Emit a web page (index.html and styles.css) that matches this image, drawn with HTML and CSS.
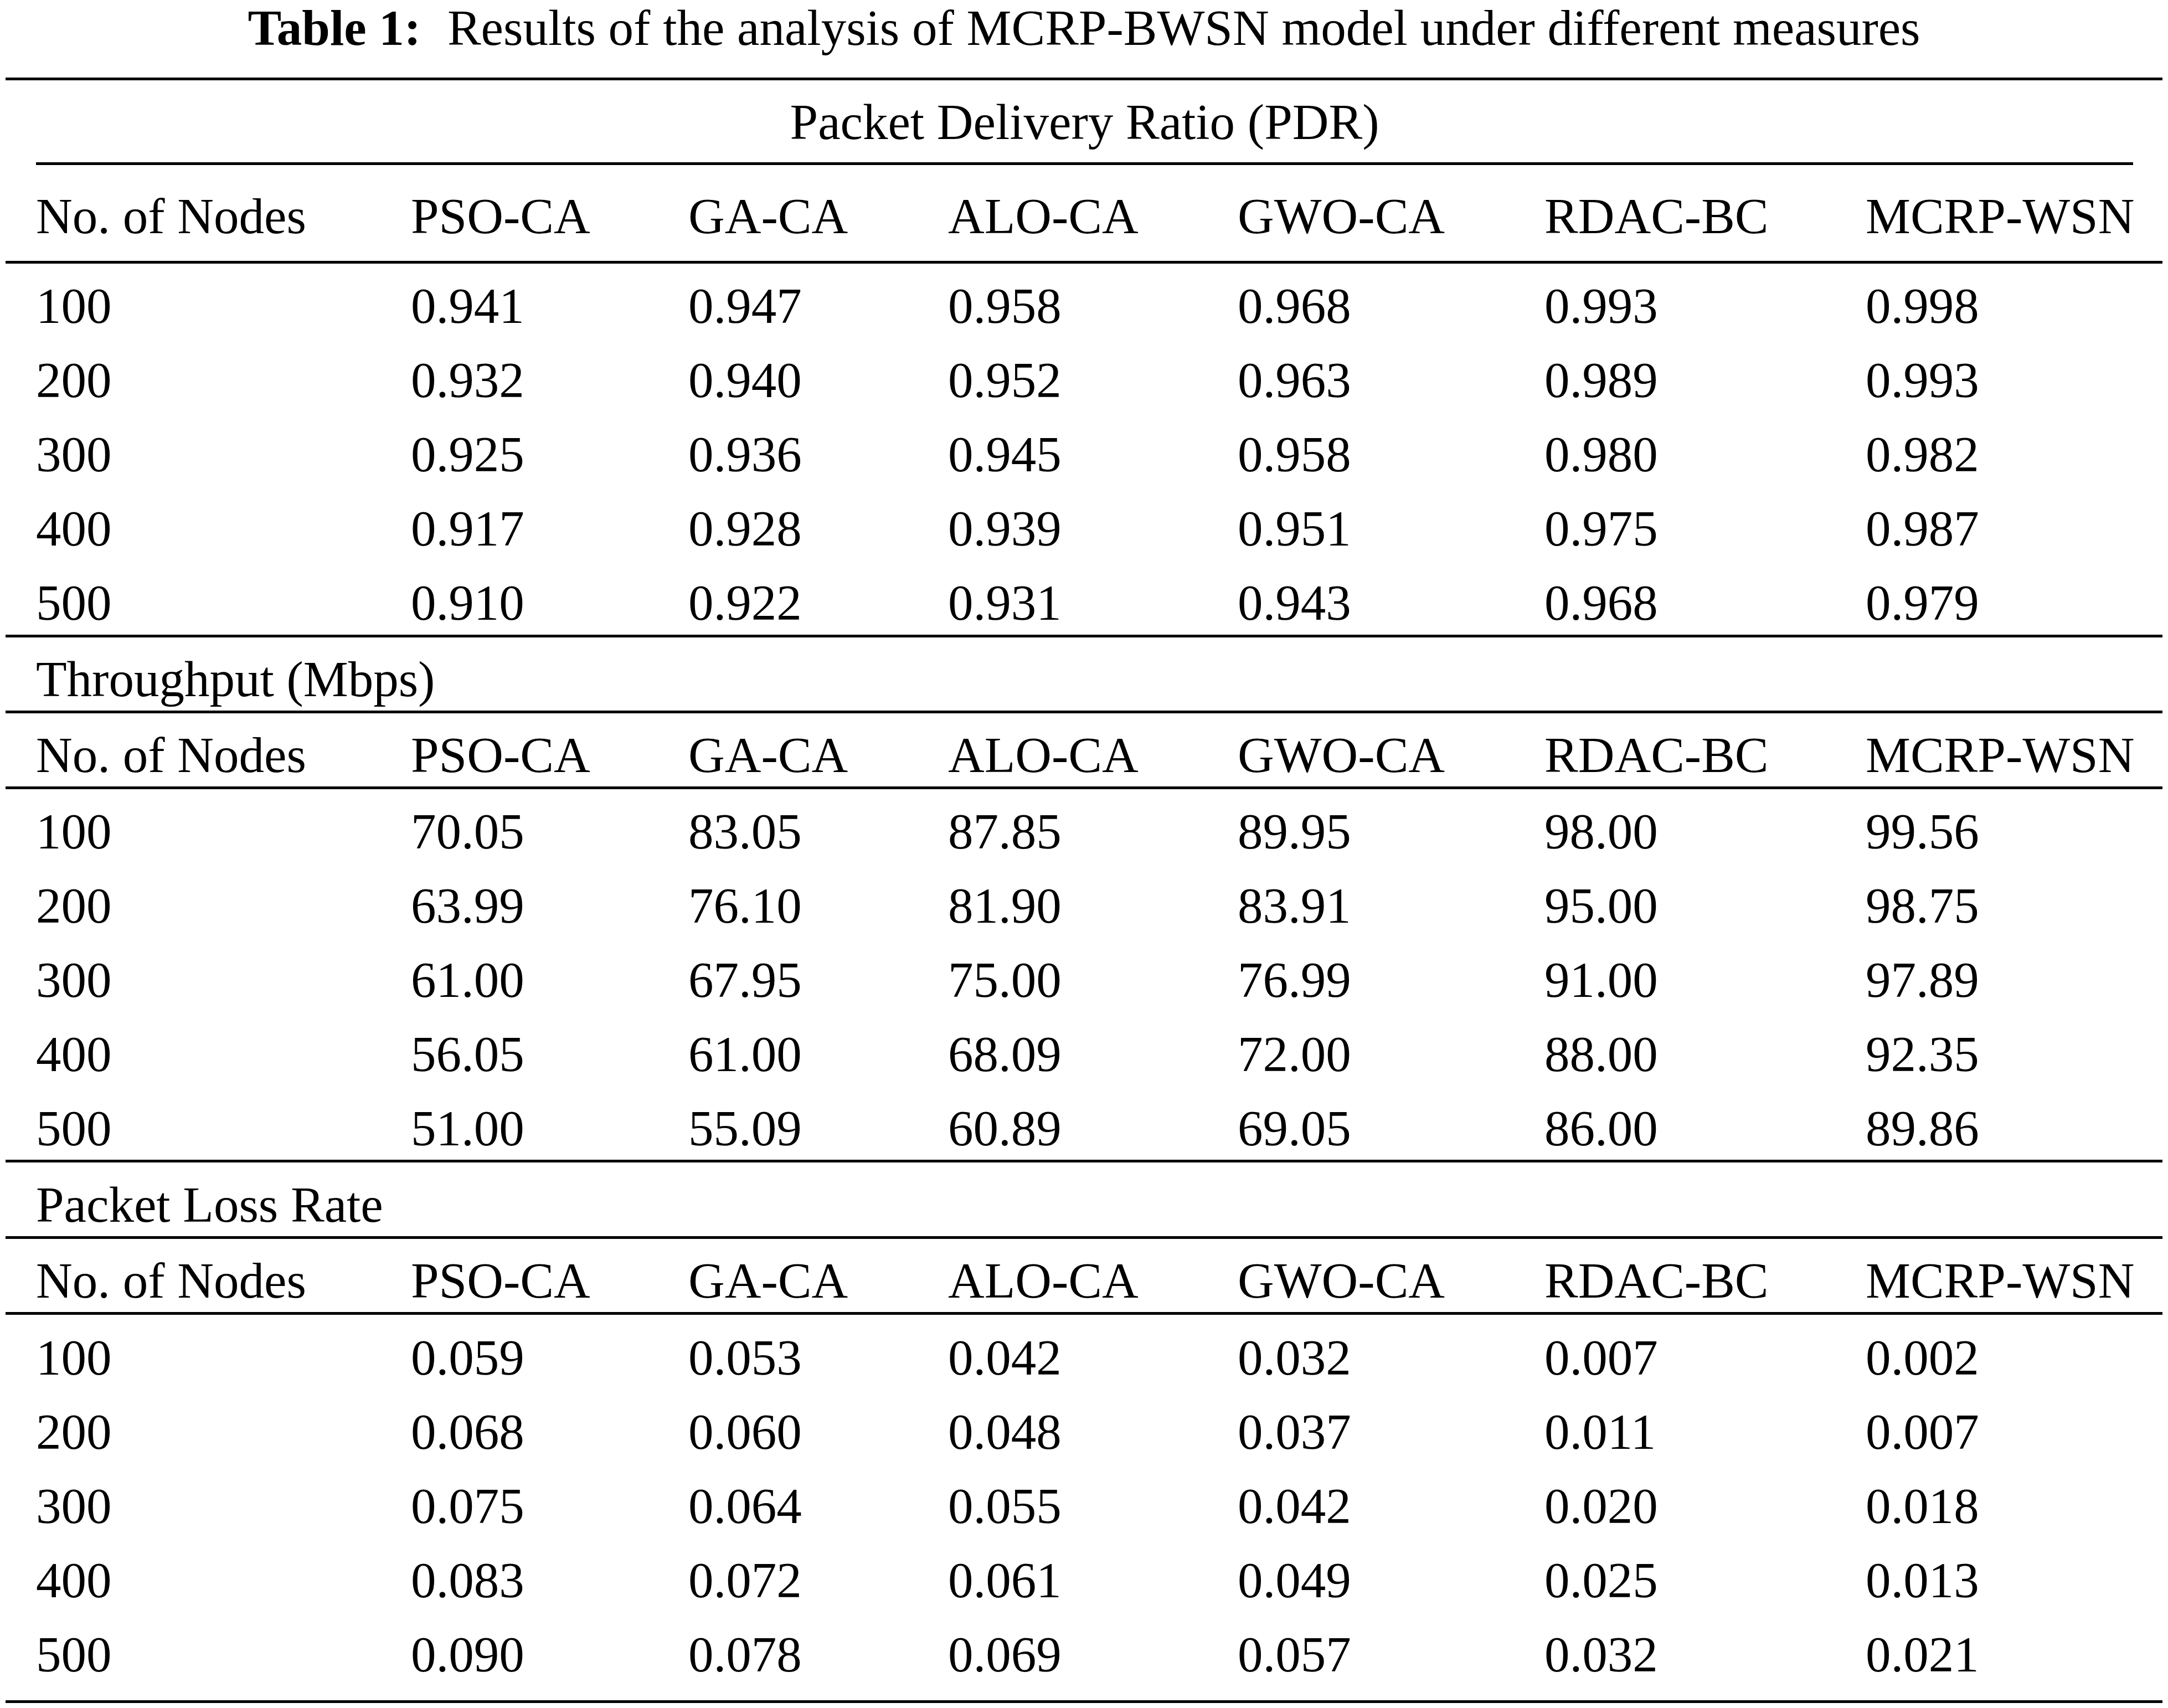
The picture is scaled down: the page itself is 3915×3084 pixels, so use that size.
FILE: index.html
```html
<!DOCTYPE html>
<html lang="en">
<head>
<meta charset="utf-8">
<title>Table 1</title>
<link rel="stylesheet" href="styles.css">
</head>
<body>
<div class="page">
  <p class="caption"><span class="caption-label">Table 1:</span> Results of the analysis of MCRP-BWSN model under different measures</p>
  <div class="table">
    <div class="rule"></div>

    <section class="block block-pdr">
      <div class="group-label centered">Packet Delivery Ratio (PDR)</div>
      <div class="rule rule-trim"></div>
      <div class="row head"><span>No. of Nodes</span><span>PSO-CA</span><span>GA-CA</span><span>ALO-CA</span><span>GWO-CA</span><span>RDAC-BC</span><span>MCRP-WSN</span></div>
      <div class="rule"></div>
      <div class="body">
        <div class="row"><span>100</span><span>0.941</span><span>0.947</span><span>0.958</span><span>0.968</span><span>0.993</span><span>0.998</span></div>
        <div class="row"><span>200</span><span>0.932</span><span>0.940</span><span>0.952</span><span>0.963</span><span>0.989</span><span>0.993</span></div>
        <div class="row"><span>300</span><span>0.925</span><span>0.936</span><span>0.945</span><span>0.958</span><span>0.980</span><span>0.982</span></div>
        <div class="row"><span>400</span><span>0.917</span><span>0.928</span><span>0.939</span><span>0.951</span><span>0.975</span><span>0.987</span></div>
        <div class="row"><span>500</span><span>0.910</span><span>0.922</span><span>0.931</span><span>0.943</span><span>0.968</span><span>0.979</span></div>
      </div>
      <div class="rule"></div>
    </section>

    <section class="block block-tp">
      <div class="group-label">Throughput (Mbps)</div>
      <div class="rule"></div>
      <div class="row head"><span>No. of Nodes</span><span>PSO-CA</span><span>GA-CA</span><span>ALO-CA</span><span>GWO-CA</span><span>RDAC-BC</span><span>MCRP-WSN</span></div>
      <div class="rule"></div>
      <div class="body">
        <div class="row"><span>100</span><span>70.05</span><span>83.05</span><span>87.85</span><span>89.95</span><span>98.00</span><span>99.56</span></div>
        <div class="row"><span>200</span><span>63.99</span><span>76.10</span><span>81.90</span><span>83.91</span><span>95.00</span><span>98.75</span></div>
        <div class="row"><span>300</span><span>61.00</span><span>67.95</span><span>75.00</span><span>76.99</span><span>91.00</span><span>97.89</span></div>
        <div class="row"><span>400</span><span>56.05</span><span>61.00</span><span>68.09</span><span>72.00</span><span>88.00</span><span>92.35</span></div>
        <div class="row"><span>500</span><span>51.00</span><span>55.09</span><span>60.89</span><span>69.05</span><span>86.00</span><span>89.86</span></div>
      </div>
      <div class="rule"></div>
    </section>

    <section class="block block-plr">
      <div class="group-label">Packet Loss Rate</div>
      <div class="rule"></div>
      <div class="row head"><span>No. of Nodes</span><span>PSO-CA</span><span>GA-CA</span><span>ALO-CA</span><span>GWO-CA</span><span>RDAC-BC</span><span>MCRP-WSN</span></div>
      <div class="rule"></div>
      <div class="body">
        <div class="row"><span>100</span><span>0.059</span><span>0.053</span><span>0.042</span><span>0.032</span><span>0.007</span><span>0.002</span></div>
        <div class="row"><span>200</span><span>0.068</span><span>0.060</span><span>0.048</span><span>0.037</span><span>0.011</span><span>0.007</span></div>
        <div class="row"><span>300</span><span>0.075</span><span>0.064</span><span>0.055</span><span>0.042</span><span>0.020</span><span>0.018</span></div>
        <div class="row"><span>400</span><span>0.083</span><span>0.072</span><span>0.061</span><span>0.049</span><span>0.025</span><span>0.013</span></div>
        <div class="row"><span>500</span><span>0.090</span><span>0.078</span><span>0.069</span><span>0.057</span><span>0.032</span><span>0.021</span></div>
      </div>
      <div class="rule"></div>
    </section>
  </div>
</div>
</body>
</html>
```

FILE: styles.css
```css
html, body {
  margin: 0;
  padding: 0;
  background: #ffffff;
}

body {
  font-family: "Liberation Serif", "Times New Roman", serif;
  font-size: 91px;
  color: #000000;
}

.page {
  width: 3895px;
  padding-left: 10px;
}

.caption {
  margin: 0 0 39px 0;
  line-height: 101px;
  text-align: center;
  white-space: nowrap;
}

.caption-label {
  font-weight: bold;
  margin-right: 25px;
}

.table {
  display: flex;
  flex-direction: column;
}

.rule {
  height: 5px;
  background: #000000;
}

.rule-trim {
  margin: 0 53px 0 55px;
}

.block {
  display: flex;
  flex-direction: column;
}

.group-label {
  line-height: 100px;
  padding: 26px 0 6px 55px;
  white-space: nowrap;
}

.group-label.centered {
  text-align: center;
  padding: 26px 53px 22px 55px;
}

.row {
  display: grid;
  grid-template-columns: 677px 501px 469px 523px 554px 580px 536px;
  padding-left: 55px;
  line-height: 100px;
  white-space: nowrap;
}

.head {
  padding-top: 26px;
  padding-bottom: 6px;
}

.block-pdr .head {
  padding-top: 43px;
  padding-bottom: 30px;
}

.body {
  display: flex;
  flex-direction: column;
  gap: 34px;
  padding: 27px 0 6px 0;
}

.block-pdr .body {
  padding-bottom: 7px;
}

.block-plr .group-label {
  padding-top: 27px;
}

.block-plr .body {
  padding-top: 28px;
  padding-bottom: 32px;
}
```
